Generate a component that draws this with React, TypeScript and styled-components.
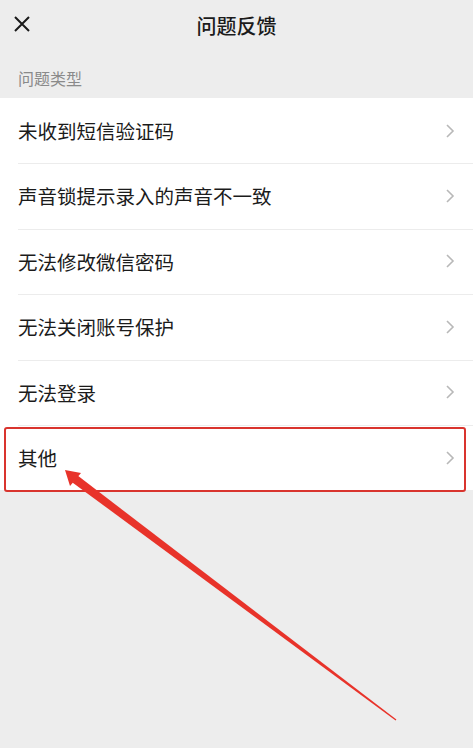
import styled, { createGlobalStyle } from "styled-components";

const GlobalStyle = createGlobalStyle`
  html, body {
    margin: 0;
    padding: 0;
    background: #ededed;
  }
  * {
    box-sizing: border-box;
  }
`;

const ITEMS = [
  "未收到短信验证码",
  "声音锁提示录入的声音不一致",
  "无法修改微信密码",
  "无法关闭账号保护",
  "无法登录",
  "其他",
];

const App = () => {
  return (
    <StWrapper>
      <GlobalStyle />
      <Header>
        <CloseButton aria-label="close">
          <svg width="18" height="18" viewBox="0 0 18 18">
            <path d="M2 2 L16 16 M16 2 L2 16" stroke="#1a1a1a" strokeWidth="2" fill="none" />
          </svg>
        </CloseButton>
        <Title>问题反馈</Title>
      </Header>
      <SectionLabel>问题类型</SectionLabel>
      <List>
        {ITEMS.map((item, i) => (
          <Row key={item} $first={i === 0} $highlighted={item === "其他"}>
            <RowText>{item}</RowText>
            <svg width="10" height="16" viewBox="0 0 10 16">
              <path d="M2 2 L8 8 L2 14" stroke="#b8b8b8" strokeWidth="1.6" fill="none" />
            </svg>
          </Row>
        ))}
      </List>
      <Arrow width="473" height="748" viewBox="0 0 473 748">
        <polygon
          points="77.6,475.6 72.4,482.4 395.6,720.6 396.4,719.4"
          fill="#e8332a"
        />
        <polygon points="65,470 81,473 70,486" fill="#e8332a" />
      </Arrow>
    </StWrapper>
  );
};

export default App;

const StWrapper = styled.main`
  position: relative;
  width: 100%;
  min-height: 100vh;
  background: #ededed;
  font-family: "Noto Sans CJK SC", "Noto Sans", sans-serif;
  color: #1b1b1b;
`;

const Header = styled.header`
  position: relative;
  display: flex;
  align-items: center;
  justify-content: center;
  height: 50px;
`;

const CloseButton = styled.button`
  position: absolute;
  left: 13px;
  top: 15px;
  display: flex;
  padding: 0;
  border: none;
  background: none;
`;

const Title = styled.h1`
  margin: 0;
  font-size: 20px;
  font-weight: 500;
  letter-spacing: 0;
`;

const SectionLabel = styled.div`
  display: flex;
  align-items: center;
  height: 48px;
  padding: 8px 18px 0;
  font-size: 16px;
  color: #8a8a8a;
`;

const List = styled.section`
  background: #ffffff;
`;

const Row = styled.div<{ $first: boolean; $highlighted: boolean }>`
  position: relative;
  display: flex;
  align-items: center;
  justify-content: space-between;
  height: 65.4px;
  padding: 0 18px;

  &::before {
    content: "";
    display: ${(p) => (p.$first ? "none" : "block")};
    position: absolute;
    top: 0;
    left: 18px;
    right: 0;
    height: 1px;
    background: #ececec;
  }

  &::after {
    content: "";
    display: ${(p) => (p.$highlighted ? "block" : "none")};
    position: absolute;
    top: 2px;
    left: 4px;
    right: 7px;
    bottom: -2px;
    border: 2.5px solid #d9342e;
    border-radius: 3px;
  }
`;

const RowText = styled.span`
  font-size: 19.5px;
  line-height: 1;
`;

const Arrow = styled.svg`
  position: absolute;
  left: 0;
  top: 0;
  pointer-events: none;
`;
